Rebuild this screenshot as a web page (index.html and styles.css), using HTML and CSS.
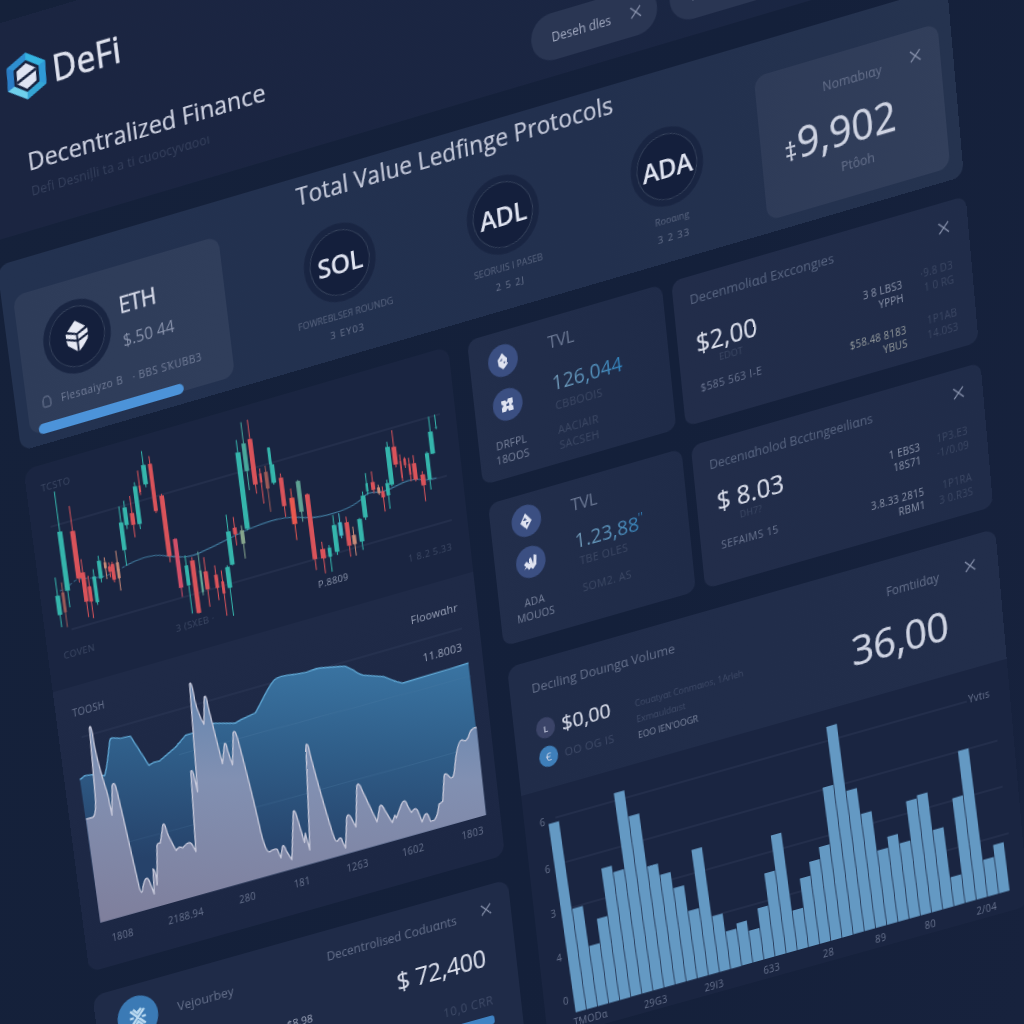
FILE: index.html
```html
<!DOCTYPE html>
<html lang="en">
<head>
<meta charset="utf-8">
<title>DeFi – Decentralized Finance</title>
<link rel="stylesheet" href="styles.css">
</head>
<body>
<main class="board">
  <header class="header">
    <div class="intro">
      <div class="brand">
        <svg class="logo" viewBox="0 0 42 44">
          <polygon points="21,0 41,11 41,33 21,44 1,33 1,11" fill="#2f8fd0"/>
          <polygon points="21,0 41,11 35,15 21,8" fill="#35b3e0"/>
          <polygon points="41,11 41,33 33,29 33,15" fill="#2f9ad6"/>
          <polygon points="41,33 21,44 21,36 33,29" fill="#35a5d4"/>
          <polygon points="21,44 1,33 8,28 21,36" fill="#6fd0ec"/>
          <polygon points="1,33 1,11 9,15 9,29" fill="#2a7cc6"/>
          <polygon points="21,7 34,14.500 34,29.500 21,37 8,29.500 8,14.500" fill="#17223f"/>
          <polygon points="21,10 31,16 31,28 21,34 11,28 11,16" fill="#dfe4f3"/>
          <path d="M11 27 L31 17" stroke="#17223f" stroke-width="2.600"/>
        </svg>
        <span class="brand-name">DeFi</span>
      </div>
      <h1 class="headline">Decentralized Finance</h1>
      <p class="tagline">Defi Desniļli ta a ti cuoocyvɑooı</p>
    </div>
    <div class="pills">
      <div class="pill"><span>Deseh dles</span><svg class="close" viewBox="0 0 12 12"><path d="M1 1 11 11M11 1 1 11"/></svg></div>
      <div class="pill pill-wide"><span>Whi.</span></div>
    </div>
  </header>

  <section class="hero">
    <article class="eth-card">
      <div class="eth-top">
        <div class="coin coin-eth">
          <svg viewBox="0 0 28 32">
            <path fill="#e6e9f4" d="M13.500 0 24 8 14 12.500 4 9Z"/>
            <path fill="#e6e9f4" d="M2 11 13 14.500 13 19 2 15.500ZM2 17.500 13 21.500 13 31 8 27 3 23Z"/>
            <path fill="#e6e9f4" d="M26 10 15 14.500 15 19 26 14.500ZM26 17 15 21.500 15 31 20 26.500 25 21Z"/>
          </svg>
        </div>
        <div class="eth-names"><b class="eth-name">ETH</b><span class="eth-price">$.50 44</span></div>
      </div>
      <div class="eth-meta">
        <svg class="lock" viewBox="0 0 10 12"><path d="M2 2.500Q2 1 3.500 1H6.500Q8 1 8 2.500L9 4V9.500Q9 11 7.500 11H2.500Q1 11 1 9.500V4Z"/></svg>
        <span>Flesɑaiyzo B</span><span>· BBS SҠUBB3</span>
      </div>
      <div class="progress"></div>
    </article>
    <div class="protocols">
      <h2 class="hero-title">Total Value Ledfinge Protocols</h2>
      <div class="coins">
        <div class="coin-item"><div class="coin">SOL</div><p>FOWREBLSEЯ ROUNDG</p><p>3 EY03</p></div>
        <div class="coin-item"><div class="coin">ADL</div><p>SEORUIS I PASEB</p><p>2 5 2J</p></div>
        <div class="coin-item"><div class="coin">ADA</div><p>Rooɑıng</p><p>3 2 33</p></div>
      </div>
    </div>
    <article class="stat-card">
      <div class="stat-head"><span>Nomɑbıɑy</span><svg class="close" viewBox="0 0 12 12"><path d="M1 1 11 11M11 1 1 11"/></svg></div>
      <div class="stat-value"><small>‡</small>9,902</div>
      <div class="stat-foot">Ptôoh</div>
    </article>
  </section>

  <div class="columns">
    <div class="col-left">
      <section class="charts">
        <svg class="candles" viewBox="0 0 450 223">
          <g class="grid"><path d="M20 62H434M28 167H434M410 123H434"/></g>
          <g id="candles" transform="matrix(.3455 .0922 -.0412 .3215 5.6 -89)">
            <path class="ma-dash" d="M120 635C150 630 155 600 190 598S260 600 318 560"/>
            <path class="ma" d="M318 560C350 542 390 526 430 530S500 540 540 522 640 472 690 450 780 416 820 416 860 422 900 414 980 394 1010 372 1030 342 1070 342 1130 312 1170 306 1200 312 1245 300"/>
          </g>
          <g class="axis dim">
            <text x="31" y="26">TCSTO</text><text x="33" y="194">COVEN</text><text x="157" y="199">3 (SXEB ·</text>
            <text class="lit" x="305" y="196">P.8809</text><text x="408" y="196">1 8.2 5.33</text>
          </g>
        </svg>
        <svg class="area" viewBox="0 0 450 285">
          <defs>
            <linearGradient id="blue" x1="0" y1="0" x2="0" y2="1"><stop offset="0" stop-color="#3a74a2"/><stop offset=".35" stop-color="#2f5d88"/><stop offset=".75" stop-color="#26426a"/></linearGradient>
            <linearGradient id="pale" x1="0" y1="0" x2="0" y2="1"><stop offset="0" stop-color="#6486b0"/><stop offset=".4" stop-color="#8190b2"/><stop offset="1" stop-color="#7f7f9c"/></linearGradient>
          </defs>
          <g class="grid"><path d="M24 51H432"/></g>
          <g transform="matrix(.3482 .0945 -.042 .333 -1.4 -117.5)">
            <path fill="url(#blue)" d="M123 595L138 583 163 580 197 583C205 560 208 520 213 482Q214 471 222 471L245 472 275 466 300 505 330 552 345 543 362 539 390 515 410 498 440 463 465 455 525 427 588 427 605 417 648 397C670 360 690 310 708 297Q725 286 765 283L800 277 830 266Q845 263 917 259L940 270Q955 283 970 285L1030 289Q1065 304 1087 308L1130 295 1225 267 1282 249 1338 697 180 1022Z"/>
            <path class="blue-line" d="M123 595L138 583 163 580 197 583C205 560 208 520 213 482Q214 471 222 471L245 472 275 466 300 505 330 552 345 543 362 539 390 515 410 498 440 463 465 455 525 427 588 427 605 417 648 397C670 360 690 310 708 297Q725 286 765 283L800 277 830 266Q845 263 917 259L940 270Q955 283 970 285L1030 289Q1065 304 1087 308L1130 295 1225 267 1282 249"/>
            <path class="under" d="M420 520L1290 287M270 780L1300 497"/>
            <path fill="url(#pale)" d="M140 712L160 707Q172 700 168 640L153 442Q156 428 162 460C172 540 195 600 206 640L218 700 219 612Q226 595 234 630L250 700 298 915Q306 945 309 915 318 870 330 900L343 935 340 860Q348 862 352 908L352 790Q354 782 362 783 364 775 370 730 374 715 384 755 398 785 410 805 418 790 430 797 450 770 460 790L469 808 455 570Q460 560 466 590L475 630 453 312Q458 298 468 360 478 400 495 430L496 352Q501 337 508 380L550 547 556 488Q560 480 566 510L580 550 582 455Q588 440 600 490 640 640 664 750 680 812 690 808 710 795 714 802L724 826 728 795Q732 780 740 805L757 831 761 690Q764 676 774 710L795 780 797 752 811 802 799 492Q804 478 812 520 850 660 880 755 888 780 894 775 904 758 908 775L918 796 921 705Q926 690 934 705L949 733 951 612Q956 596 966 622L1012 718 1020 672Q1026 662 1036 685L1058 720 1065 698 1070 706 1085 665Q1094 645 1102 668L1115 690Q1126 670 1134 685L1147 718Q1158 680 1166 700L1172 716 1184 712Q1194 700 1197 665L1208 657 1212 580Q1216 570 1225 581 1240 600 1243 560 1250 475 1265 475 1278 482 1284 465 1290 438 1308 438L1338 697 180 1022Z"/>
            <path class="pale-line" d="M140 712L160 707Q172 700 168 640L153 442Q156 428 162 460C172 540 195 600 206 640L218 700 219 612Q226 595 234 630L250 700 298 915Q306 945 309 915 318 870 330 900L343 935 340 860Q348 862 352 908L352 790Q354 782 362 783 364 775 370 730 374 715 384 755 398 785 410 805 418 790 430 797 450 770 460 790L469 808 455 570Q460 560 466 590L475 630 453 312Q458 298 468 360 478 400 495 430L496 352Q501 337 508 380L550 547 556 488Q560 480 566 510L580 550 582 455Q588 440 600 490 640 640 664 750 680 812 690 808 710 795 714 802L724 826 728 795Q732 780 740 805L757 831 761 690Q764 676 774 710L795 780 797 752 811 802 799 492Q804 478 812 520 850 660 880 755 888 780 894 775 904 758 908 775L918 796 921 705Q926 690 934 705L949 733 951 612Q956 596 966 622L1012 718 1020 672Q1026 662 1036 685L1058 720 1065 698 1070 706 1085 665Q1094 645 1102 668L1115 690Q1126 670 1134 685L1147 718Q1158 680 1166 700L1172 716 1184 712Q1194 700 1197 665L1208 657 1212 580Q1216 570 1225 581 1240 600 1243 560 1250 475 1265 475 1278 482 1284 465 1290 438 1308 438"/>
          </g>
          <g class="axis">
            <text x="35" y="29">TOOSH</text><text class="lit big" x="405" y="33">Floowɑhr</text><text class="lit big" x="409" y="73">11.8003</text>
            <text x="40" y="262">1808</text><text x="109" y="261">2188.94</text><text x="176" y="260">280</text><text x="235" y="260">181</text>
            <text x="295" y="259">1263</text><text x="355" y="259">1602</text><text x="419" y="259">1803</text>
          </g>
        </svg>
      </section>
      <section class="volume-card">
        <div class="voucher">
          <div class="badge"><svg viewBox="0 0 24 24"><path d="M5 5 19 19M19 5 5 19M4 12H8M16 12H20M8 4 12 8 16 4M8 20 12 16 16 20"/></svg></div>
          <span>Vejourbey</span>
        </div>
        <div class="voucher-sub">$8.98</div>
        <div class="coduants">
          <div class="coduants-head"><span>Decentrolised Coduɑnts</span><svg class="close" viewBox="0 0 12 12"><path d="M1 1 11 11M11 1 1 11"/></svg></div>
          <div class="coduants-value">$ 72,400</div>
          <div class="coduants-note">10,0 CRR</div>
          <div class="coduants-bar"></div>
        </div>
      </section>
    </div>

    <div class="col-right">
      <div class="row">
        <article class="tvl">
          <div class="tvl-side">
            <i class="dot"><svg viewBox="0 0 16 16"><path d="M8 0 11 4 13 6 12.500 12 8 16 3.500 12 3 6 5 4ZM7.500 5 5 7.500H7.500ZM9 8.500V11L11 9Z" fill-rule="evenodd"/></svg></i>
            <i class="dot"><svg viewBox="0 0 16 16"><path d="M2 3H6L8 5 9 2H14V7L12 8 14 10V14H9L8 11 6 14H2V10L4 8 2 6ZM7 7V9H10V6Z" fill-rule="evenodd"/></svg></i>
            <p>DRFPL</p><p>18OOS</p>
          </div>
          <div class="tvl-main">
            <h3>TVL</h3><strong>126,044</strong><p>CBBOOIS</p><p class="gap">AACIAIR</p><p>SACSEH</p>
          </div>
        </article>
        <article class="exchange">
          <div class="ex-head"><span>Decenmoliɑd Exccongıes</span><svg class="close" viewBox="0 0 12 12"><path d="M1 1 11 11M11 1 1 11"/></svg></div>
          <div class="ex-body">
            <div class="ex-main"><strong>$2,00</strong><em>EDOT</em><p>$585 563 I-E</p></div>
            <div class="ex-a"><p>3 8 LBS3</p><p>YPPH</p><p class="gap warm">$58.48 8183</p><p class="warm">YBUS</p></div>
            <div class="ex-b"><p>·9.8 D3</p><p>1 0 RG</p><p class="gap">1P1AB</p><p>14.0S3</p></div>
          </div>
        </article>
      </div>
      <div class="row row-second">
        <article class="tvl">
          <div class="tvl-side">
            <i class="dot"><svg viewBox="0 0 16 16"><path d="M8 0 14 8 8 16 2 9ZM7 4 5 7H9ZM8 9V12L11 9Z" fill-rule="evenodd"/></svg></i>
            <i class="dot"><svg viewBox="0 0 16 16"><path d="M1 9 4 6 7 9 7 4 9 3 11 10 12 1 15 2 14 11 10 15 8 13 6 15 4 12 1 14 3 11Z"/></svg></i>
            <p>ADA</p><p>MOUOS</p>
          </div>
          <div class="tvl-main">
            <h3>TVL</h3><strong>1.23,88<sup>''</sup></strong><p>TBE OLES</p><p class="gap">SOM2. AS</p>
          </div>
        </article>
        <article class="exchange">
          <div class="ex-head"><span>Decenıɑholod Bcctıngeeıliɑns</span><svg class="close" viewBox="0 0 12 12"><path d="M1 1 11 11M11 1 1 11"/></svg></div>
          <div class="ex-body">
            <div class="ex-main"><strong>$ 8.03</strong><em>DH7?</em><p>SEFAIMS 15</p></div>
            <div class="ex-a"><p>1 EBS3</p><p>18S71</p><p class="gap">3.8.33 2815</p><p>RBM1</p></div>
            <div class="ex-b"><p>1P3.E3</p><p>·1/0.09</p><p class="gap">1P1RA</p><p>3 0.R3S</p></div>
          </div>
        </article>
      </div>
      <section class="trading">
        <div class="tr-head">
          <div class="tr-left">
            <h3>Decıling Douıngɑ Volume</h3>
            <div class="tr-info">
              <div class="tr-prices">
                <div class="tr-line"><i class="mini">ʟ</i><strong>$0,00</strong></div>
                <div class="tr-line"><i class="mini mini-blue">€</i><span>OO OG IS</span></div>
              </div>
              <div class="tr-notes"><p>Couɑtyɑt Conmɑıos, 1Arleh</p><p>Exmɑuldɑıst</p><p class="lit">EOO IEN'OOGR</p></div>
            </div>
          </div>
          <div class="tr-right">
            <div class="tr-top"><span>Fomtıidɑy</span><svg class="close" viewBox="0 0 12 12"><path d="M1 1 11 11M11 1 1 11"/></svg></div>
            <strong>36,00</strong>
          </div>
        </div>
        <svg class="bars" viewBox="0 0 516 251">
          <g class="grid"><path d="M33 31H471M34 78H499M35 125H500M36 173H502"/></g>
          <g id="bars" transform="translate(32 231.500) rotate(-.12) skewX(1.900)"></g>
          <g class="axis">
            <text x="484" y="33">Yvtıs</text>
            <text x="19" y="36">6</text><text x="19" y="84">6</text><text x="20" y="130">3</text><text x="21" y="176">4</text><text x="23" y="221">0</text>
            <text x="47" y="245">TMODɑ</text><text x="117" y="247">29G3</text><text x="180" y="247">29I3</text><text x="242" y="246">633</text>
            <text x="303" y="246">28</text><text x="359" y="246">89</text><text x="412" y="246">80</text><text x="472" y="246">2/04</text>
          </g>
        </svg>
      </section>
    </div>
  </div>
</main>
<script src="charts.js"></script>
</body>
</html>
```
FILE: styles.css
```css
* { box-sizing: border-box; }
html, body { margin: 0; height: 100%; overflow: hidden; }
body {
  background: linear-gradient(105deg, #15213a 0%, #14203a 60%, #17223d 100%);
  color: #d3d7e6;
  font-family: "Open Sans", "Noto Sans", sans-serif;
  width: 1024px;
  height: 1024px;
}
h1, h2, h3, p { margin: 0; font-weight: 400; }
i, em { font-style: normal; }

/* The whole dashboard lies on one tilted plane. */
.board {
  width: 990px;
  height: 1180px;
  transform-origin: 0 0;
  transform: matrix3d(.943718, -.282594, 0, -.0000167667, .133839, 1.036074, 0, .0000441824, 0, 0, 1, 0, -3, 266, 0, 1) translateY(-225px);
}
.close { width: 12px; height: 12px; fill: none; stroke: #8791ab; stroke-width: 1.2; overflow: visible; flex: none; }

/* Header */
.header {
  display: flex;
  height: 201px;
  margin: 0 0 24px -8px;
  padding-left: 42px;
  border-radius: 0 0 12px 12px;
  background: linear-gradient(90deg, #1b2541, #1a2643);
}
.intro { width: 534px; padding-top: 34px; }
.brand { display: flex; align-items: center; height: 44px; gap: 6px; }
.logo { width: 42px; height: 44px; transform: rotate(4deg); }
.brand-name { font-size: 34.5px; line-height: 44px; letter-spacing: .2px; color: #dfe2ee; -webkit-text-stroke: .6px #dfe2ee; }
.headline { margin: 44px 0 0 11px; font-size: 24.3px; line-height: 28px; color: #cfd3e2; white-space: nowrap; -webkit-text-stroke: .2px #cfd3e2; }
.tagline { margin: 7px 0 0 11px; font-size: 12.5px; line-height: 16px; color: #36415d; white-space: nowrap; letter-spacing: .2px; }
.pills { display: flex; gap: 13px; align-items: flex-end; padding-bottom: 15px; }
.pill { display: flex; align-items: center; justify-content: space-between; width: 130px; height: 44px; padding: 0 16px 0 21px; border-radius: 22px; background: #2a3653; font-size: 12px; color: #a3abc2; }
.pill-wide { width: 170px; }

/* Hero band */
.hero { display: flex; height: 182px; margin-bottom: 19px; padding: 0 13px 0 12px; border-radius: 12px; background: linear-gradient(90deg, #233250, #22304e 60%, #25334f); }
.eth-card { width: 217px; height: 137px; margin-top: 33px; padding-left: 9px; border-radius: 12px; background: linear-gradient(100deg, #2e3c59, #303e5b); }
.eth-top { display: flex; padding: 20px 0 0 16px; gap: 11px; }
.coin { display: flex; align-items: center; justify-content: center; width: 75px; height: 75px; margin: 0 auto; border-radius: 50%; background: #141f3c; border: 6px solid #192542; box-shadow: inset 0 0 0 1px #39465f; font-size: 26px; font-weight: 600; color: #dfe3f0; letter-spacing: -.6px; }
.coin-eth { width: 71px; height: 71px; margin: 0; flex: none; }
.coin-eth svg { width: 27px; height: 31px; }
.eth-names { display: flex; flex-direction: column; }
.eth-name { margin-top: 4px; font-size: 22px; line-height: 26px; font-weight: 500; color: #d5d9e8; letter-spacing: -.6px; -webkit-text-stroke: .3px #d5d9e8; }
.eth-price { margin-top: 12px; font-size: 16px; line-height: 20px; color: #8791aa; }
.eth-meta { display: flex; align-items: center; height: 14px; margin-top: 11px; padding-left: 7px; font-size: 10.5px; color: #717c97; letter-spacing: .5px; gap: 10px; white-space: nowrap; }
.lock { width: 10px; height: 12px; fill: none; stroke: #717c97; flex: none; }
.progress { width: 154px; height: 10px; margin-top: 13px; border-radius: 5px; background: #4c93d9; }
.protocols { width: 559px; padding-top: 4px; }
.hero-title { padding-left: 84px; font-size: 23.2px; line-height: 28px; color: #c5cadb; white-space: nowrap; letter-spacing: .15px; -webkit-text-stroke: .2px #c5cadb; }
.coins { display: flex; margin-top: 22px; padding-left: 35px; }
.coin-item { width: 171px; text-align: center; font-size: 9.2px; line-height: 14px; letter-spacing: 0; color: #58647f; }
.coin-item p { margin-top: 6px; white-space: nowrap; }
.coin-item p + p { margin-top: 3px; letter-spacing: 1px; font-size: 9.8px; color: #66718b; }
.stat-card { width: 189px; height: 138px; margin-top: 32px; border-radius: 12px; background: linear-gradient(100deg, #2e3b58, #323f5b); text-align: center; }
.stat-head { display: flex; justify-content: flex-end; gap: 29px; padding: 18px 19px 0 0; font-size: 12.5px; line-height: 20px; color: #65708b; }
.stat-value { margin: 9px 0 0 -26px; font-size: 40px; line-height: 52px; color: #ced3e2; -webkit-text-stroke: .3px #ced3e2; }
.stat-value small { font-size: 24px; margin-right: 1px; }
.stat-foot { margin: -6px 0 0 4px; font-size: 12.5px; line-height: 18px; color: #65708b; }

.columns { display: flex; gap: 20px; }
.col-left { width: 450px; }
.col-right { width: 520px; }

/* Shared chart text */
svg { display: block; }
.grid path { stroke: #2c3956; stroke-width: 1; fill: none; }
.axis text { font-size: 10px; fill: #68738e; text-anchor: middle; letter-spacing: .2px; }
.axis.dim text { font-size: 9.5px; fill: #3d4965; letter-spacing: .4px; }
.axis .lit, .axis.dim .lit { fill: #8e97ae; }
.axis .big { font-size: 11px; fill: #99a2b8; }

.charts { height: 510px; border-radius: 12px; overflow: hidden; background: #1a2541; }
.candles { width: 450px; height: 223px; }
.ma, .ma-dash { fill: none; stroke: #3f7699; stroke-width: 3.5; }
.ma-dash { stroke-dasharray: 10 7; opacity: .7; }
.area { width: 450px; height: 287px; background: linear-gradient(#1f2a47, #1c2744); }
.blue-line { fill: none; stroke: #5ea5d2; stroke-width: 4; stroke-linejoin: round; }
.pale-line { fill: none; stroke: #c6c8da; stroke-width: 4; stroke-linejoin: round; }
.under { fill: none; stroke: #5382aa; stroke-width: 2; opacity: .35; }

.volume-card { display: flex; height: 220px; margin-top: 25px; border-radius: 12px; background: #1f2b48; }
.voucher { display: flex; gap: 21px; width: 160px; height: 44px; margin: 12px 0 0 23px; align-items: center; font-size: 13px; color: #65708b; }
.badge { display: flex; align-items: center; justify-content: center; width: 44px; height: 44px; border-radius: 50%; background: #3b7ab5; flex: none; }
.badge svg { width: 26px; height: 26px; fill: none; stroke: #b9d9f0; stroke-width: 2.4; }
.voucher-sub { width: 40px; margin: 76px 0 0 18px; font-size: 11px; color: #a0a8bd; }
.coduants { flex: 1; padding-right: 20px; text-align: right; }
.coduants-head { display: flex; justify-content: flex-end; gap: 26px; padding-top: 18px; font-size: 12.5px; line-height: 18px; color: #65708b; white-space: nowrap; }
.coduants-value { margin: 18px 12px 0 0; font-size: 24.8px; line-height: 34px; color: #dadeeb; letter-spacing: -.2px; -webkit-text-stroke: .2px #dadeeb; }
.coduants-note { margin: 21px 9px 0 0; font-size: 12px; line-height: 16px; color: #3f4b68; letter-spacing: .6px; }
.coduants-bar { width: 166px; height: 9px; margin: 7px 10px 0 auto; border-radius: 3px; background: #3f83c4; }

/* Right column cards */
.row { display: flex; gap: 10px; height: 142px; margin-bottom: 20px; }
.row-second { padding-left: 3px; margin-bottom: 22px; }
.tvl { display: flex; width: 204px; border-radius: 10px; background: linear-gradient(100deg, #222e4b, #1f2b48); }
.tvl-side { width: 68px; padding-top: 13px; text-align: center; font-size: 10.5px; line-height: 13.5px; color: #76809a; }
.tvl-side p { letter-spacing: .2px; }
.dot { display: flex; align-items: center; justify-content: center; width: 31px; height: 31px; margin: 0 auto 12px; border-radius: 50%; background: #3b4f82; }
.dot + .dot { margin-bottom: 16px; }
.dot svg { width: 16px; height: 16px; fill: #dfe3f1; }
.tvl-main { padding: 12px 0 0 14px; font-size: 11px; line-height: 15px; color: #3c4864; }
.tvl-main h3 { font-size: 17px; line-height: 24px; color: #6b7894; letter-spacing: -.4px; }
.tvl-main strong { display: block; margin: 14px 0 0; font-size: 20px; line-height: 28px; font-weight: 400; white-space: nowrap; background: linear-gradient(90deg, #7197b5, #5492bd 60%, #2f82bd); background-clip: text; -webkit-background-clip: text; color: transparent; }
.tvl-main sup { font-size: 12px; line-height: 0; }
.tvl-main p { letter-spacing: .3px; margin-left: 1px; }
.tvl-main .gap { margin-top: 9px; }
.row-second .tvl-side { width: 74px; padding-top: 11px; }
.row-second .dot { margin-bottom: 10px; }
.row-second .dot + .dot { margin-bottom: 17px; }
.row-second .tvl-main { padding: 12px 0 0 11px; }
.row-second .tvl-main strong { margin: 10px 0 -2px; }
.row-second .tvl-main p { margin-left: 3px; }
.row-second .tvl-main .gap { margin-top: 12px; }
.exchange { flex: 1; padding: 13px 19px 0 17px; border-radius: 10px; background: linear-gradient(100deg, #222d4a, #202c49); }
.ex-head { display: flex; justify-content: space-between; font-size: 13px; line-height: 18px; color: #596682; white-space: nowrap; }
.ex-head .close { margin-top: 5px; }
.ex-body { display: flex; }
.ex-main { width: 117px; padding: 17px 0 0 2px; white-space: nowrap; }
.ex-main strong { display: block; font-size: 25px; line-height: 34px; font-weight: 400; color: #dadeeb; -webkit-text-stroke: .2px #dadeeb; }
.ex-main em { display: block; margin: -3px 0 3px 22px; font-size: 9.5px; line-height: 11px; color: #3c4864; }
.ex-main p { margin-top: 12px; font-size: 10.5px; line-height: 15px; color: #69748f; letter-spacing: .4px; }
.ex-a, .ex-b { text-align: right; font-size: 10px; line-height: 13px; white-space: nowrap; letter-spacing: .2px; }
.ex-a { width: 100px; padding-top: 29px; color: #8b94aa; }
.ex-a .gap, .ex-b .gap { margin-top: 18px; }
.ex-a .warm { color: #949a9c; }
.ex-b { flex: 1; padding-top: 23px; color: #3c4864; line-height: 14px; }
.row-second .ex-head { font-size: 12.5px; }
.row-second .ex-head .close { margin-top: 4px; }
.row-second .ex-head span { margin-top: 2px; }
.row-second .ex-main { padding: 10px 0 0 4px; }
.row-second .ex-a { padding-top: 25px; }
.row-second .ex-b { padding-top: 21px; }

/* Trading volume */
.trading { width: 516px; height: 381px; margin-left: 4px; border-radius: 12px; overflow: hidden; background: #1a2541; }
.tr-head { display: flex; justify-content: space-between; height: 130px; background: linear-gradient(100deg, #202c49, #222e4b); }
.tr-left { padding: 18px 0 0 23px; }
.tr-left h3 { font-size: 13px; line-height: 18px; color: #65708b; white-space: nowrap; }
.tr-info { display: flex; margin-top: 22px; }
.tr-prices { width: 105px; }
.tr-line { display: flex; align-items: center; height: 22px; margin-bottom: 7px; gap: 7px; font-size: 11.5px; color: #3f4b68; white-space: nowrap; letter-spacing: .3px; }
.tr-line strong { font-size: 20.5px; font-weight: 400; letter-spacing: 0; color: #d5d9e7; -webkit-text-stroke: .2px #d5d9e7; }
.mini { display: flex; align-items: center; justify-content: center; width: 20px; height: 21px; border-radius: 50%; background: #3b4468; font-size: 11px; color: #ced3e6; flex: none; }
.mini-blue { background: #3f7fba; }
.tr-notes { padding-top: 5px; font-size: 9.2px; line-height: 16px; color: #3f4b68; white-space: nowrap; letter-spacing: -.1px; }
.tr-notes .lit { font-size: 9.2px; color: #7c869e; }
.tr-right { padding: 23px 23px 0 0; text-align: right; }
.tr-top { display: flex; justify-content: flex-end; gap: 27px; font-size: 12px; line-height: 18px; color: #65708b; }
.tr-right strong { display: block; margin: 11px 34px 0 0; font-size: 41px; line-height: 54px; font-weight: 400; color: #ced3e2; letter-spacing: -.5px; -webkit-text-stroke: .3px #ced3e2; }
.bars { width: 516px; height: 251px; }
.bars rect { fill: #6499c3; }
```
FILE: charts.js
```js
const NS = 'http://www.w3.org/2000/svg';

function add(parent, tag, attrs) {
  const el = document.createElementNS(NS, tag);
  for (const key in attrs) el.setAttribute(key, attrs[key]);
  parent.appendChild(el);
}

// Daily volume, one value per bar.
const volume = [196, 105, 63, 88, 137, 130, 208, 181, 126, 114, 97, 70, 130, 58, 39, 44, 33, 53, 86, 122,
  41, 71, 85, 97, 155, 214, 145, 118, 77, 88, 78, 118, 121, 82, 30, 108, 153, 38, 50];
const bars = document.getElementById('bars');
volume.forEach((h, i) => add(bars, 'rect', { x: i * 11.96, y: -h, width: 11.2, height: h }));

// Candles: x, wick top, body top, body bottom, wick bottom, colour, body width.
const G = '#35b5ac', R = '#d9535a', M = '#5fa394', O = '#c98a78', D = '#9b5a58';
const candles = [
  [117, 595, 650, 708, 745, G, 14], [133, 610, 640, 700, 745, D, 9], [133, 337, 457, 635, 685, G, 15],
  [169, 380, 455, 598, 610, R, 15], [195, 540, 580, 668, 715, R, 13], [212, 590, 622, 668, 718, R, 11],
  [228, 570, 592, 670, 678, G, 11], [241, 530, 545, 598, 610, G, 12], [257, 535, 550, 568, 600, O, 8],
  [270, 550, 562, 578, 595, R, 9], [281, 548, 555, 602, 610, R, 11], [296, 515, 550, 598, 635, O, 9],
  [310, 382, 430, 513, 560, G, 13], [319, 365, 385, 438, 450, G, 13], [340, 350, 402, 437, 475, R, 13],
  [354, 310, 322, 435, 450, G, 13], [362, 275, 320, 340, 348, R, 6], [376, 217, 258, 316, 325, G, 14],
  [401, 232, 255, 396, 402, R, 12], [438, 345, 350, 532, 550, R, 14], [475, 478, 480, 627, 655, '#d14f68', 13],
  [503, 530, 560, 620, 705, G, 11], [527, 535, 545, 703, 705, R, 14], [545, 518, 575, 640, 650, M, 7],
  [560, 535, 578, 632, 685, R, 13], [590, 560, 588, 628, 665, R, 11], [610, 575, 608, 645, 712, R, 9],
  [626, 560, 565, 628, 712, G, 14], [631, 408, 458, 558, 560, G, 14], [645, 415, 447, 467, 500, R, 12],
  [668, 440, 455, 495, 540, '#86a58c', 12], [668, 185, 222, 450, 455, G, 15], [676, 132, 195, 278, 335, '#48a89c', 13],
  [698, 125, 182, 318, 345, R, 14], [722, 270, 285, 312, 375, R, 7], [740, 262, 280, 330, 400, D, 11],
  [748, 208, 208, 258, 260, G, 9], [758, 255, 258, 313, 318, G, 14], [787, 285, 298, 383, 415, R, 13],
  [819, 330, 358, 437, 485, '#e8584f', 15], [838, 305, 308, 400, 430, M, 13], [872, 345, 348, 542, 575, R, 14],
  [908, 490, 512, 540, 585, R, 15], [928, 500, 508, 535, 580, G, 11], [945, 410, 440, 520, 530, G, 14],
  [960, 405, 432, 472, 480, '#45b9c6', 12], [982, 415, 432, 502, 535, R, 13], [1001, 445, 470, 498, 532, O, 12],
  [1020, 420, 422, 490, 515, G, 14], [1030, 340, 352, 418, 425, G, 14], [1038, 285, 315, 340, 350, G, 7],
  [1056, 280, 312, 335, 345, R, 12], [1073, 320, 328, 345, 350, O, 9], [1086, 325, 340, 358, 400, R, 11],
  [1100, 305, 315, 352, 392, G, 11], [1105, 192, 207, 320, 325, G, 14], [1120, 158, 207, 260, 268, R, 14],
  [1140, 230, 250, 300, 310, R, 4], [1150, 238, 242, 262, 270, R, 7], [1165, 240, 258, 290, 310, R, 6],
  [1180, 232, 256, 305, 310, R, 13], [1205, 280, 290, 322, 370, R, 14], [1220, 222, 226, 305, 335, G, 12],
  [1229, 118, 162, 228, 229, G, 14], [1242, 112, 148, 152, 155, G, 5]
];
const LEAN = 0.125;
const group = document.getElementById('candles');
for (const [x, wickTop, top, bottom, wickBottom, color, width] of candles) {
  const mid = (top + bottom) / 2;
  const at = y => x + (y - mid) * LEAN;
  const line = (y1, y2, w) => add(group, 'line', { x1: at(y1), y1, x2: at(y2), y2, stroke: color, 'stroke-width': w });
  line(wickTop, wickBottom, 3);
  line(top, bottom, width);
}
```
